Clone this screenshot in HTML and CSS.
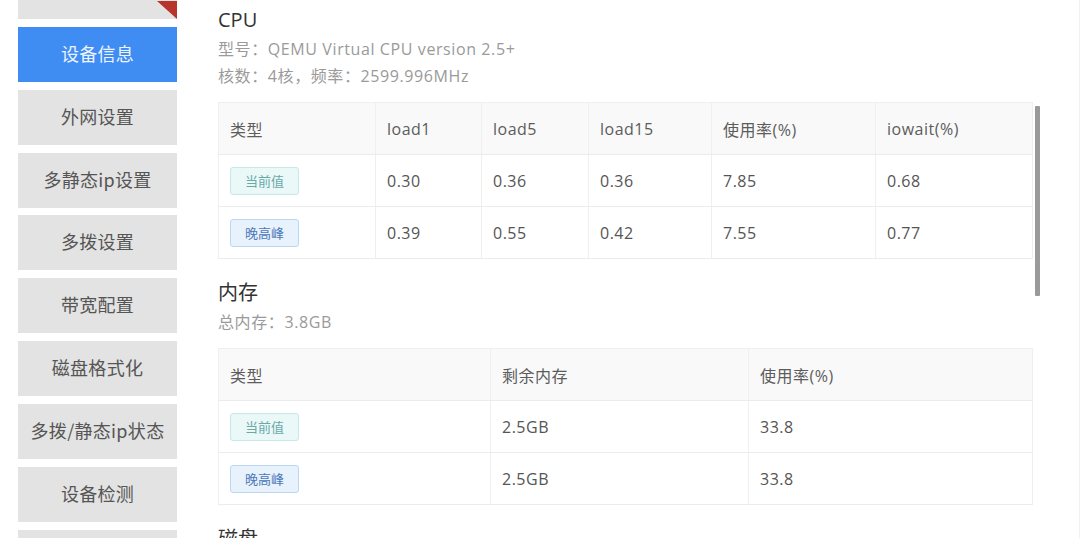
FILE: index.html
```html
<!DOCTYPE html>
<html lang="zh">
<head>
<meta charset="utf-8">
<title>设备信息</title>
<link rel="stylesheet" href="styles.css">
</head>
<body>
<div class="page">
  <nav class="sidebar">
    <div class="nav-item first"><span class="corner"></span></div>
    <div class="nav-item active">设备信息</div>
    <div class="nav-item">外网设置</div>
    <div class="nav-item">多静态ip设置</div>
    <div class="nav-item">多拨设置</div>
    <div class="nav-item">带宽配置</div>
    <div class="nav-item">磁盘格式化</div>
    <div class="nav-item">多拨/静态ip状态</div>
    <div class="nav-item">设备检测</div>
    <div class="nav-item"></div>
  </nav>
  <main class="main">
    <div class="content">
      <h2 class="sec-title">CPU</h2>
      <p class="sub">型号：QEMU Virtual CPU version 2.5+</p>
      <p class="sub">核数：4核，频率：2599.996MHz</p>
      <table class="tbl cpu">
        <colgroup><col class="c1"><col class="c2"><col class="c3"><col class="c4"><col class="c5"><col class="c6"></colgroup>
        <thead><tr><th>类型</th><th>load1</th><th>load5</th><th>load15</th><th>使用率(%)</th><th>iowait(%)</th></tr></thead>
        <tbody>
          <tr><td><span class="tag cur">当前值</span></td><td>0.30</td><td>0.36</td><td>0.36</td><td>7.85</td><td>0.68</td></tr>
          <tr><td><span class="tag peak">晚高峰</span></td><td>0.39</td><td>0.55</td><td>0.42</td><td>7.55</td><td>0.77</td></tr>
        </tbody>
      </table>
      <h2 class="sec-title gap">内存</h2>
      <p class="sub">总内存：3.8GB</p>
      <table class="tbl mem">
        <colgroup><col class="m1"><col class="m2"><col class="m3"></colgroup>
        <thead><tr><th>类型</th><th>剩余内存</th><th>使用率(%)</th></tr></thead>
        <tbody>
          <tr><td><span class="tag cur">当前值</span></td><td>2.5GB</td><td>33.8</td></tr>
          <tr><td><span class="tag peak">晚高峰</span></td><td>2.5GB</td><td>33.8</td></tr>
        </tbody>
      </table>
      <h2 class="sec-title gap">磁盘</h2>
    </div>
    <div class="thumb"></div>
  </main>
</div>
</body>
</html>
```

FILE: styles.css
```css
* { box-sizing: border-box; }
html, body { margin: 0; padding: 0; background: #fff; }
body {
  font-family: "Open Sans", "Noto Sans CJK SC", sans-serif;
  color: #555;
  width: 1080px;
  height: 538px;
  overflow: hidden;
}
.page {
  display: flex;
  align-items: flex-start;
}
.sidebar {
  width: 177px;
  padding-left: 18px;
  margin-top: -36px;
  display: flex;
  flex-direction: column;
  gap: 7.85px;
  flex-shrink: 0;
}
.nav-item {
  position: relative;
  height: 55px;
  padding-bottom: 3px;
  background: #e3e3e3;
  display: flex;
  align-items: center;
  justify-content: center;
  font-size: 18px;
  letter-spacing: 0.3px;
  color: #555;
  font-family: "Noto Sans CJK SC", sans-serif;
}
.nav-item.active {
  background: #3f8cf3;
  color: #eef4ff;
}
.corner {
  position: absolute;
  right: 0;
  bottom: 0;
  width: 20px;
  height: 18px;
  background: #b8342a;
  clip-path: polygon(0 0, 100% 0, 100% 100%);
}
.main {
  position: relative;
  width: 886px;
  margin-left: 23px;
  padding-left: 18px;
  border-right: 1px solid #f1f1f1;
  height: 600px;
}
.content {
  width: 814px;
  padding-top: 7px;
}
.sec-title {
  margin: 0;
  font-size: 20px;
  line-height: 26px;
  font-weight: normal;
  color: #333;
  font-family: "Open Sans", "Noto Sans CJK SC", sans-serif;
}
.sec-title.gap { margin-top: 21px; }
.sub {
  margin: 0;
  font-size: 16px;
  letter-spacing: 0.6px;
  line-height: 27px;
  color: #9a9a9a;
}
.sec-title + .sub { margin-top: 3px; }
.tbl {
  margin-top: 12px;
  width: 814px;
  table-layout: fixed;
  border-collapse: collapse;
  border: 1px solid #efefef;
  font-size: 16px;
  letter-spacing: 0.5px;
}
.tbl th, .tbl td {
  height: 52px;
  padding: 0 0 0 11px;
  text-align: left;
  font-weight: normal;
  color: #555;
  border-bottom: 1px solid #ececec;
  border-right: 1px solid #efefef;
  font-family: "Open Sans", "Noto Sans CJK SC", sans-serif;
}
.tbl th { background: #f9f9f9; color: #5c5c5c; }
.tbl td { background: #fff; }
.cpu .c1 { width: 157px; }
.cpu .c2 { width: 106px; }
.cpu .c3 { width: 107px; }
.cpu .c4 { width: 123px; }
.cpu .c5 { width: 164px; }
.cpu .c6 { width: 157px; }
.mem .m1 { width: 272px; }
.mem .m2 { width: 258px; }
.mem .m3 { width: 284px; }
.tag {
  display: inline-flex;
  align-items: center;
  justify-content: center;
  width: 69px;
  height: 28px;
  font-size: 13px;
  letter-spacing: 0;
  border-radius: 3px;
  border: 1px solid;
  font-family: "Noto Sans CJK SC", sans-serif;
}
.tag.cur {
  background: #ebf8f8;
  border-color: #c5e8e8;
  color: #6aa9a9;
}
.tag.peak {
  background: #e8f2fc;
  border-color: #bcd7f2;
  color: #4a78b8;
}
.thumb {
  position: absolute;
  left: 835px;
  top: 106px;
  width: 5px;
  height: 190px;
  background: #9a9a9a;
  border-radius: 1px;
}
```
